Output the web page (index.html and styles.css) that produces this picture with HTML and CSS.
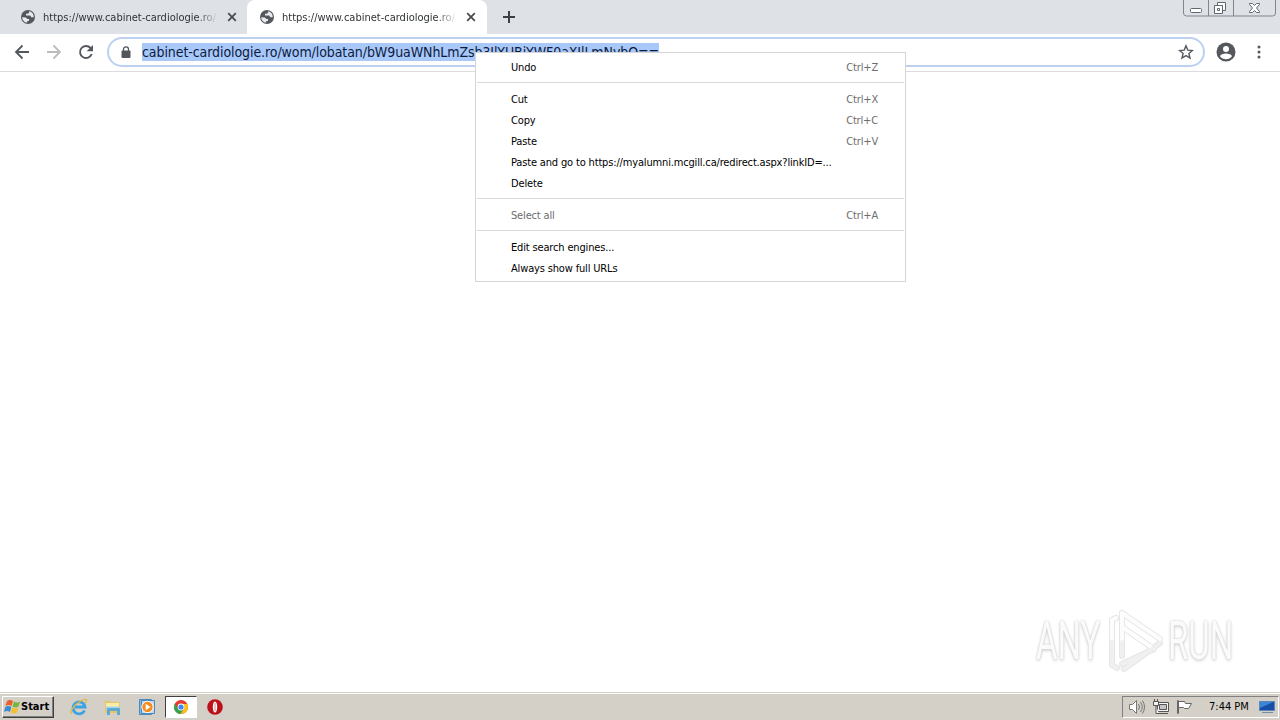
FILE: index.html
```html
<!DOCTYPE html>
<html lang="en">
<head>
  <meta charset="UTF-8" />
  <title>https://www.cabinet-cardiologie.ro/</title>
  <link rel="stylesheet" href="styles.css">
</head>
<body>
  <svg class="defs" width="0" height="0">
    <symbol id="globe" viewBox="0 0 16 16">
      <circle cx="8" cy="8" r="7" fill="#54585d"/>
      <path d="M2.2 8.3l3.6.1 1.6 1.6H9v2H7.200v1.600C4.500 13.500 2.300 11.500 2.200 8.300zM9.200 2.200v1.300L7.800 4.800H6v1.700h4.200l1.200 1.700 2.300.1C14 5.200 12 2.800 9.200 2.200z" fill="#e8eaed"/>
    </symbol>
    <symbol id="close" viewBox="0 0 10 10">
      <path d="M1.200 1.200l7.600 7.600M8.800 1.200L1.200 8.800" stroke="#45494d" stroke-width="1.700"/>
    </symbol>
  </svg>

  <header class="tabs">
    <div class="tab">
      <svg class="globe"><use href="#globe"/></svg>
      <span class="title">https://www.cabinet-cardiologie.ro/</span>
      <svg class="close"><use href="#close"/></svg>
    </div>
    <div class="tab active">
      <svg class="globe"><use href="#globe"/></svg>
      <span class="title">https://www.cabinet-cardiologie.ro/</span>
      <svg class="close"><use href="#close"/></svg>
    </div>
    <svg class="plus" viewBox="0 0 12 12"><path d="M6 0v12M0 6h12" stroke="#3c4043" stroke-width="2"/></svg>
    <div class="window-buttons">
      <svg width="93" height="17" viewBox="0 0 93 17" fill="none">
        <path d="M.5 0v13q0 3 3 3h86q3 0 3-3V0M25.500 0v16M50.500 0v16" stroke="#81858d"/>
        <rect x="7.500" y="8.500" width="11" height="4" rx="1" fill="#fff" stroke="#62666d"/>
        <path d="M34.500 2.500h8v8h-3v-5h-5zM31.500 5.500h8v8h-8zM34.500 8.500h2v2h-2z" fill="#fff" stroke="#62666d"/>
        <path d="M66.500 3.500h3l2 2 2-2h3v1l-3 3.500 3 3.500v1h-3l-2-2-2 2h-3v-1l3-3.500-3-3.500z" fill="#fff" stroke="#62666d"/>
      </svg>
    </div>
  </header>

  <div class="toolbar">
    <svg class="nav back" viewBox="0 0 16 16"><path d="M15 8H2M8.500 1.500L2 8l6.500 6.500" fill="none" stroke="#54585d" stroke-width="1.800"/></svg>
    <svg class="nav forward" viewBox="0 0 16 16"><path d="M1 8h13M7.500 1.500L14 8l-6.500 6.500" fill="none" stroke="#babcbe" stroke-width="1.800"/></svg>
    <svg class="nav reload" viewBox="0 0 16 16"><path d="M13.700 10A6 6 0 1 1 12.500 4L13 4.600" fill="none" stroke="#54585d" stroke-width="1.900"/><path d="M15 1v6.300H8.700z" fill="#54585d"/></svg>
    <div class="omnibox">
      <svg class="lock" viewBox="0 0 10 13"><rect x=".5" y="4.500" width="9" height="7.500" rx="1" fill="#54585d"/><path d="M2.500 5V3.300a2.500 2.500 0 0 1 5 0V5" fill="none" stroke="#54585d" stroke-width="1.300"/></svg>
      <span class="url">cabinet-cardiologie.ro/wom/lobatan/bW9uaWNhLmZsb3JlYUBjYWF0aXJlLmNvbQ==</span>
      <svg class="star" viewBox="0 0 16 16"><path d="M8 1.800l1.800 4.300 4.600.4-3.500 3 1.100 4.500L8 11.600 4 14l1.100-4.500-3.500-3 4.600-.4z" fill="none" stroke="#54585d" stroke-width="1.400"/></svg>
    </div>
    <svg class="avatar" viewBox="0 0 20 20"><circle cx="10" cy="10" r="9.500" fill="#54585d"/><circle cx="10" cy="7" r="3" fill="#fff"/><path d="M4 14.300c1-3.700 11-3.700 12 0a7.500 7.500 0 0 1-12 0z" fill="#fff"/></svg>
    <svg class="dots" viewBox="0 0 4 14"><g fill="#54585d"><circle cx="2" cy="2" r="1.500"/><circle cx="2" cy="7" r="1.500"/><circle cx="2" cy="12" r="1.500"/></g></svg>
  </div>

  <main class="page">
    <div class="watermark">
      <span class="brand">ANY</span>
      <svg width="60" height="66" viewBox="0 0 60 66" fill="none" stroke-linejoin="round" stroke-linecap="round">
        <g stroke="#e6e6e6" stroke-width="6"><path d="M5 12v45l5 3M5 12l4-2M15 5v43M15 5l38 26M15 19l32 22L15 56M53 35L17 61"/></g>
        <g stroke="#fdfdfd" stroke-width="4"><path d="M5 12v22M5 12l4-2M15 5v29M15 5l38 26M15 19l32 22"/></g>
        <path d="M5 34v23l5 3M15 34v14M47 41L15 56M53 35L17 61" stroke="#f0f0f0" stroke-width="4"/>
      </svg>
      <span class="brand">RUN</span>
    </div>
  </main>

  <div class="menu">
    <div class="item"><span>Undo</span><span class="key">Ctrl+Z</span></div>
    <hr>
    <div class="item"><span>Cut</span><span class="key">Ctrl+X</span></div>
    <div class="item"><span>Copy</span><span class="key">Ctrl+C</span></div>
    <div class="item"><span>Paste</span><span class="key">Ctrl+V</span></div>
    <div class="item"><span>Paste and go to https://myalumni.mcgill.ca/redirect.aspx?linkID=...</span></div>
    <div class="item"><span>Delete</span></div>
    <hr>
    <div class="item disabled"><span>Select all</span><span class="key">Ctrl+A</span></div>
    <hr>
    <div class="item"><span>Edit search engines...</span></div>
    <div class="item"><span>Always show full URLs</span></div>
  </div>

  <footer class="taskbar">
    <div class="start">
      <svg width="17" height="16" viewBox="0 0 17 16">
        <path d="M3 2q3-2 6 0L7.500 7q-3-2-6 0z" fill="#e8602c"/>
        <path d="M10 2.500q3 2 6 0L14.500 7.500q-3 2-6 0z" fill="#79b541"/>
        <path d="M1.300 8q3-2 6 0L6 13q-3-2-6 0z" fill="#3a8bd0"/>
        <path d="M8.200 8.500q3 2 6 0L13 13.500q-3 2-6 0z" fill="#f7bd2b"/>
      </svg>
      <span>Start</span>
    </div>
    <div class="quick">
      <svg viewBox="0 0 18 18"><path d="M14.500 12.500A6 6 0 1 1 15 9H5" fill="none" stroke="#3ba3e3" stroke-width="2.800"/><path d="M2 15C-1 17 2 8 9 4s9-3 6.500 1" fill="none" stroke="#e5b83c" stroke-width="1.300"/></svg>
    </div>
    <div class="quick">
      <svg viewBox="0 0 18 18"><path d="M1 3h5l1 1h9v11H1z" fill="#e6c667"/><path d="M2 5h13v6H2z" fill="#faedaa"/><path d="M2 8.500h14v3H2z" fill="#a5d5ea"/><path d="M3 17v-6q0-1 1-1h11q1 0 1 1v6h-3v-4H6v4z" fill="#5fa9d5"/></svg>
    </div>
    <div class="quick">
      <svg viewBox="0 0 18 18"><path d="M1.500 1.500h12v15h-12z" fill="#7cb9e9" stroke="#4b89bd"/><path d="M3.500 2.500h13v13h-13z" fill="#b9daf2" stroke="#4b89bd"/><circle cx="9.500" cy="9" r="5.700" fill="#f68b1e" stroke="#fff"/><path d="M7.700 5.800v6.400l4.800-3.200z" fill="#fff"/></svg>
    </div>
    <div class="quick pressed">
      <svg viewBox="0 0 18 18"><circle cx="9" cy="9" r="7" fill="#e33b2e"/><path d="M2.900 5.500A7 7 0 0 0 8.500 16l3.500-5.300L6 10.700z" fill="#34a350"/><path d="M9 6h6.300A7 7 0 0 1 8.500 16L12 10.700z" fill="#fbc116"/><circle cx="9" cy="9" r="3.400" fill="#fff"/><circle cx="9" cy="9" r="2.600" fill="#4285f4"/></svg>
    </div>
    <div class="quick">
      <svg viewBox="0 0 18 18"><circle cx="9" cy="9" r="7.800" fill="#bd1119"/><ellipse cx="9" cy="9" rx="2.200" ry="5.500" fill="#fff"/><path d="M9 5v8" stroke="#c98a8a"/></svg>
    </div>
    <div class="tray">
      <svg width="18" height="16" viewBox="0 0 18 16" fill="none" stroke="#777"><path d="M1.500 5.500h3l4-4v13l-4-4h-3z" fill="#fff"/><path d="M10.500 5q2 3 0 6M12.500 3q3.500 5 0 10M14.500 1.500q4 6.500 0 13"/></svg>
      <svg class="net" width="17" height="16" viewBox="0 0 17 16" fill="none" stroke="#555"><path d="M4.500 3.500h11v9h-11z" fill="#f5f5f5"/><path d="M6.500 5.500h7v5h-7z" fill="#c5c5c5"/><path d="M6 14.500h9M.5 2.500h5v4h-5zM1.500 0v2M4.500 0v2M3 7v7.500h3" fill="#f5f5f5"/></svg>
      <svg class="flag" width="17" height="16" viewBox="0 0 17 16" stroke="#666"><path d="M1.500 1.500h1v13h-1z" fill="#fff"/><path d="M2.500 2.500h6l1 2h6l-3 5h-4l-1-1h-5z" fill="#fff"/></svg>
      <span class="clock">7:44 PM</span>
      <svg class="desktop" width="16" height="14" viewBox="0 0 16 14"><path d="M.5 1.500h15v9H.5z" fill="#174fa8" stroke="#5688bd"/><path d="M1 2h13L1 8z" fill="#3c86d4"/><path d="M3 12.500h11" stroke="#6d8fae"/></svg>
    </div>
  </footer>
</body>
</html>
```
FILE: styles.css
```css
* {
  box-sizing: border-box;
}
body {
  margin: 0;
  width: 1280px;
  height: 720px;
  overflow: hidden;
  display: flex;
  flex-direction: column;
  background: #fff;
  color: #000;
  font: 11px "DejaVu Sans Condensed", "DejaVu Sans", sans-serif;
  font-stretch: condensed;
}
svg {
  flex: none;
  display: block;
}
.defs {
  position: absolute;
}
.tabs {
  height: 34px;
  flex: none;
  display: flex;
  background: #dee1e6;
}
.tab {
  display: flex;
  align-items: center;
  height: 34px;
  width: 239px;
  padding-left: 12px;
}
.tab:first-child {
  width: 247px;
  padding-left: 20px;
}
.tab.active {
  width: 240px;
  background: #fff;
  border-radius: 8px 8px 0 0;
}
.globe {
  width: 16px;
  height: 16px;
}
.title {
  width: 175px;
  margin-left: 7px;
  overflow: hidden;
  white-space: nowrap;
  color: #303336;
  -webkit-mask-image: linear-gradient(90deg, #000 88%, transparent);
}
.close {
  width: 10px;
  height: 10px;
  margin-left: 9px;
}
.plus {
  width: 12px;
  height: 12px;
  margin: 11px 0 0 16px;
}
.window-buttons {
  margin-left: auto;
  padding-right: 4px;
}
.toolbar {
  height: 38px;
  flex: none;
  display: flex;
  align-items: center;
  padding: 0 0 1px 14px;
  border-bottom: 1px solid #dadce0;
}
.nav {
  width: 16px;
  height: 16px;
  margin-right: 16px;
}
.reload {
  margin-right: 13px;
}
.omnibox {
  width: 1098px;
  height: 30px;
  display: flex;
  align-items: center;
  padding-left: 12px;
  border: 2px solid #bcd1f0;
  border-radius: 15px;
}
.lock {
  width: 10px;
  height: 13px;
}
.url {
  margin-left: 11px;
  height: 18px;
  line-height: 18px;
  font-size: 14px;
  letter-spacing: -0.08px;
  color: #0b1b3a;
  background: #a9c8fa;
}
.star {
  width: 16px;
  height: 16px;
  margin: 0 9px 0 auto;
}
.avatar {
  width: 20px;
  height: 20px;
  margin-left: 11px;
}
.dots {
  width: 4px;
  height: 14px;
  margin-left: 21px;
}
.page {
  flex: 1;
  display: flex;
  align-items: flex-end;
  justify-content: flex-end;
  padding: 0 46px 18px 0;
}
.watermark {
  display: flex;
  align-items: center;
}
.watermark svg {
  margin: 0 1px 0 5px;
}
.brand {
  width: 66px;
  font: 54px/60px "Roboto", sans-serif;
  color: #fbfbfb;
  text-shadow: 0 0 3px #c4c4c4, 0 2px 4px #ddd;
  transform: scaleX(.61);
  transform-origin: left;
}
.menu {
  position: absolute;
  left: 475px;
  top: 52px;
  width: 431px;
  height: 230px;
  padding: 4px 1px;
  background: #fff;
  border: 1px solid #d5d5d7;
}
.item {
  display: flex;
  justify-content: space-between;
  height: 21px;
  line-height: 21px;
  padding: 0 26px 0 34px;
  white-space: nowrap;
  letter-spacing: -0.16px;
}
.menu hr {
  height: 1px;
  margin: 4px 0 6px;
  border: 0;
  background: #d9dadc;
}
.key,
.disabled {
  color: #6d6d6d;
}
.taskbar {
  height: 28px;
  flex: none;
  display: flex;
  align-items: center;
  padding-left: 2px;
  background: #d4d0c8;
  border-top: 1px solid #d4d0c8;
  box-shadow: inset 0 1px #fff;
}
.start {
  width: 52px;
  height: 22px;
  display: flex;
  align-items: center;
  padding-left: 1px;
  margin-right: 9px;
  font-weight: bold;
  border: 1px solid;
  border-color: #fff #404040 #404040 #fff;
  box-shadow: inset -1px -1px #808080;
}
.quick {
  width: 32px;
  height: 22px;
  margin-right: 2px;
  display: flex;
  align-items: center;
  justify-content: center;
}
.quick svg {
  width: 18px;
  height: 18px;
}
.pressed {
  background: #fff;
  border: 1px solid;
  border-color: #404040 #fff #fff #404040;
}
.tray {
  width: 157px;
  height: 22px;
  margin: 0 1px 0 auto;
  display: flex;
  align-items: center;
  padding-left: 5px;
  border: 1px solid;
  border-color: #808080 #fff #fff #808080;
}
.net {
  margin-left: 7px;
}
.flag {
  margin-left: 6px;
}
.clock {
  width: 40px;
  margin-left: 16px;
  white-space: nowrap;
}
.desktop {
  margin-left: 10px;
}
```
